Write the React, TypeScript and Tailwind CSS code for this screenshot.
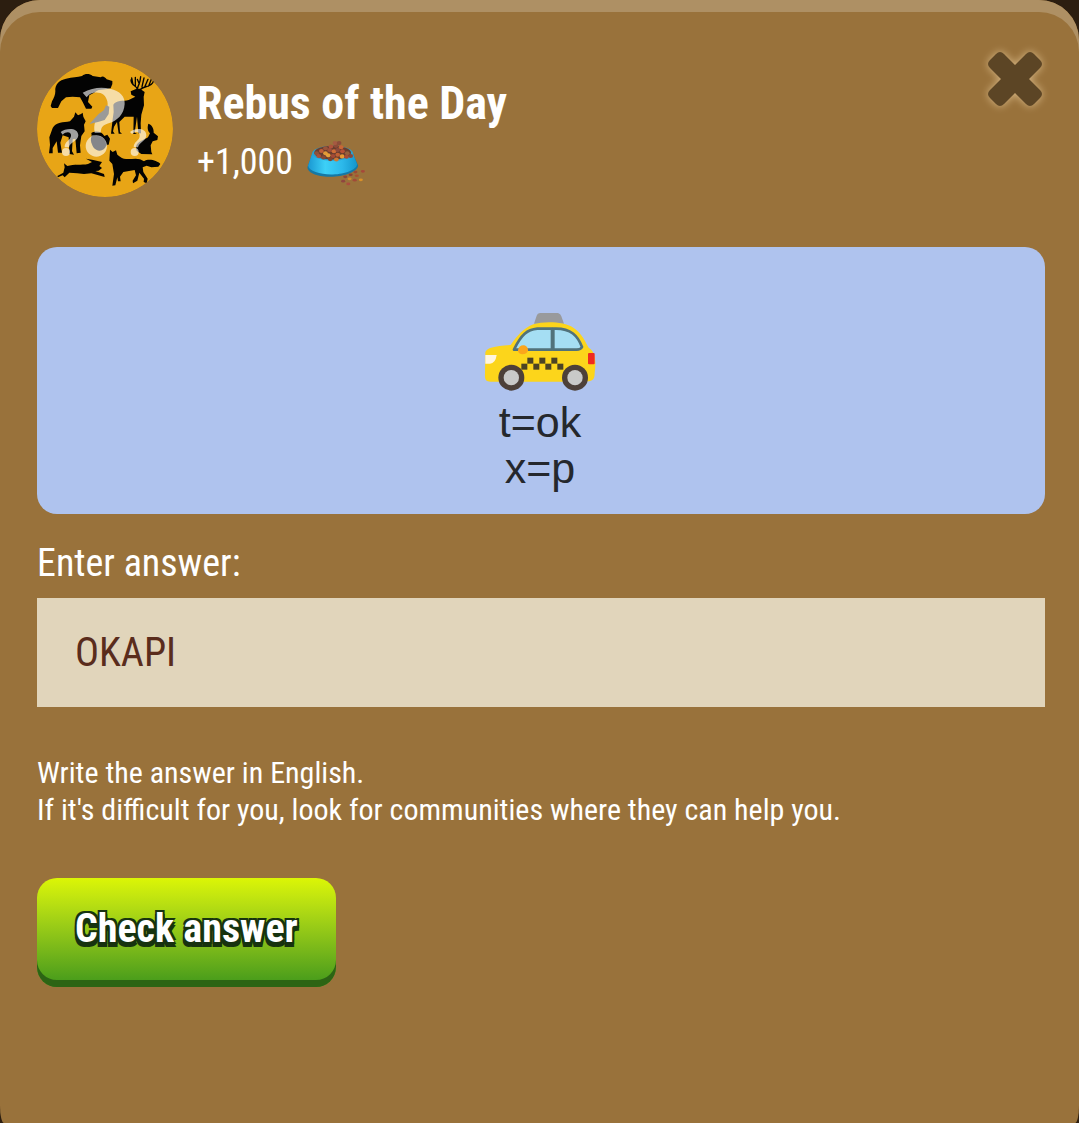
import { useState } from 'react';

const FONT = "font-['Roboto_Condensed','Roboto',sans-serif]";

/**
 * Round badge with animal silhouettes and question marks
 */
const AnimalsBadge = () => (
  <svg viewBox="21 17 408 408" className="size-[136px] shrink-0 rounded-full" aria-hidden="true">
    <circle cx="225" cy="221" r="204" fill="#e8a516" />
    <g fill="#030303">
      {/* Bear */}
      <path d="M62 152 L66 138 C72 128 76 118 76 108 C74 88 88 74 108 70 C128 66 142 66 156 62 C166 54 178 54 188 62 L212 66 C218 60 226 66 230 72 L247 77 L247 86 L242 99 L232 101 L206 104 C198 108 190 114 178 120 L174 140 L187 154 L184 160 L168 160 L158 140 L150 126 L128 124 L108 126 L94 138 L84 158 L66 158 Z" />
      {/* Deer */}
      <path d="M302 108 L318 101 L330 100 L344 110 L341 124 L342 150 L334 178 L332 204 L333 234 L325 234 L321 184 L314 232 L321 236 L310 236 L311 184 L284 184 L268 200 L270 230 L276 235 L266 235 L261 200 L252 214 L249 228 L254 235 L243 235 L248 192 L251 170 L250 148 C258 134 280 138 296 134 L316 124 L304 118 Z" />
      {/* Wolf */}
      <path d="M132 184 L136 171 L144 180 L153 176 L158 172 L160 184 L167 198 L162 208 L164 228 L154 242 L150 270 L152 292 L140 294 L136 250 L128 252 L126 288 L132 298 L118 296 L116 246 L98 240 L91 262 L96 292 L84 292 L80 258 L68 278 L68 294 L57 294 L60 268 L58 246 L68 218 C78 200 100 202 120 198 Z" />
      {/* Bird */}
      <path d="M184 233 C196 226 214 226 223 242 L232 238 L240 250 L236 268 L226 268 L222 258 L186 250 Z" />
      {/* Rabbit */}
      <path d="M355 205 C366 208 372 220 371 232 L384 243 L382 254 L368 258 L362 270 L364 290 L367 297 L334 296 L320 286 L318 274 C322 258 342 254 354 246 L360 234 C352 226 352 214 355 205 Z" />
      {/* Hare */}
      <path d="M82 362 L100 352 L104 336 L102 324 L112 332 C132 326 154 330 174 326 L186 320 L168 310 L190 314 L216 320 L208 332 L216 338 L206 346 L196 347 L222 356 L224 365 L184 354 L162 356 L142 354 L118 352 L104 366 L98 360 L84 366 Z" />
      {/* Fox */}
      <path d="M240 283 L248 290 L258 285 L262 298 L270 304 C288 318 312 306 330 312 L342 318 C356 308 382 316 391 326 L385 334 L364 336 L350 331 L338 336 L340 350 L353 370 L350 384 L341 380 L342 370 L328 352 L322 376 L309 384 L308 376 L318 360 L314 344 L280 350 L270 364 L272 378 L264 378 L262 366 L256 390 L247 391 L252 356 L247 326 L238 316 Z" />
    </g>
    {/* Antlers */}
    <path
      d="M322 102 C320 88 304 94 303 74 M309 88 L305 68 M316 92 L316 66 M322 102 C324 86 330 90 332 64 M328 86 L322 72 M332 102 C338 92 366 96 370 78 M344 95 L354 72 M356 92 L364 72 M336 94 L342 68"
      fill="none"
      stroke="#030303"
      strokeWidth="4"
      strokeLinecap="round"
    />
    {/* Question marks */}
    <g fill="#fff" fillOpacity="0.62">
      <path d="M158 112 C186 96 216 94 240 100 C270 106 286 124 284 146 C282 178 262 196 236 204 C218 210 214 214 212 232 L194 232 C190 204 196 192 212 184 C228 174 236 158 232 138 C228 118 212 108 190 112 C180 114 172 122 170 126 Z" />
      <path d="M92 230 C106 218 144 214 145 240 C144 258 120 260 117 276 L104 276 C103 258 121 256 123 242 C125 230 110 226 98 238 Z" />
      <path d="M300 230 C314 218 348 216 349 240 C348 258 328 260 324 276 L311 276 C311 258 329 256 329 242 C330 230 318 226 306 236 Z" />
      <circle cx="199" cy="272" r="32" />
      <circle cx="108" cy="290" r="12" />
      <circle cx="314" cy="290" r="12" />
    </g>
    <path d="M178 206 L206 176 L222 164 L228 150 L238 154 L236 176 L224 194 L204 200 Z" fill="#9a9a98" />
    <path d="M187 240 C202 242 216 244 223 252 L229 270 C224 288 202 292 190 276 C182 262 180 250 187 240 Z" fill="#85868a" />
  </svg>
);

const KIBBLE: [number, number, string][] = [
  [46, 52, '#8e523b'], [60, 45, '#c25e38'], [72, 52, '#e29a38'], [84, 42, '#a0503c'], [97, 46, '#cf6e38'],
  [108, 42, '#8c4a3c'], [122, 46, '#b85034'], [136, 52, '#98603c'], [52, 60, '#aa5038'], [66, 64, '#854a36'],
  [80, 58, '#e8a038'], [94, 60, '#a34a36'], [108, 56, '#c06034'], [121, 61, '#e69a34'], [134, 62, '#a84c36'],
  [88, 32, '#b0543c'], [103, 30, '#8f4b38'], [118, 34, '#c86636'], [72, 37, '#9a543a'], [100, 22, '#a55a42'],
  [146, 60, '#8d4638'], [112, 22, '#8d4c3a'], [86, 69, '#7f4532'], [104, 70, '#cf7832'],
];

const SPILLED: [number, number, string][] = [
  [182, 101, '#a6483a'], [160, 103, '#9c4a35'], [146, 111, '#8b4232'], [164, 114, '#aa5030'], [130, 117, '#8c4638'],
  [143, 123, '#d28a2a'], [158, 127, '#a24a38'], [176, 126, '#d99028'], [124, 130, '#8f4540'], [139, 138, '#aa4d3e'],
];

const FoodBowl = () => (
  <svg viewBox="0 0 200 150" className="h-[51px] w-[68px] shrink-0" role="img" aria-label="Food">
    <defs>
      <linearGradient id="bowl" x1="0" x2="1">
        <stop offset="0" stopColor="#1a98d2" />
        <stop offset="0.35" stopColor="#3dd0f7" />
        <stop offset="0.7" stopColor="#2cb8ea" />
        <stop offset="1" stopColor="#1496cc" />
      </linearGradient>
    </defs>
    <path d="M33 50 L19 88 C18 108 58 118 94 117 C132 116 168 100 168 84 L152 48 Z" fill="#1578a5" />
    <path d="M33 48 L21 84 C22 102 60 111 94 110 C130 109 164 96 165 80 L152 46 Z" fill="url(#bowl)" />
    <ellipse cx="93" cy="48" rx="60" ry="22" fill="#2aa0cf" />
    <ellipse cx="93" cy="46" rx="54" ry="20" fill="#6a3d2e" />
    {KIBBLE.map(([x, y, color]) => (
      <ellipse key={`${x}-${y}`} cx={x} cy={y - 4} rx="7" ry="6" fill={color} />
    ))}
    {SPILLED.map(([x, y, color]) => (
      <ellipse key={`${x}-${y}`} cx={x} cy={y} rx="6" ry="4" fill={color} />
    ))}
  </svg>
);

const Taxi = () => (
  <svg viewBox="0 0 336 234" className="h-[78px] w-[112px]" role="img" aria-label="Taxi">
    <path d="M168 0 H222 Q230 2 232 10 L240 32 H150 L158 8 Q160 0 168 0 Z" fill="#999a9c" />
    <path
      d="M4 118 C8 104 30 100 80 96 C98 70 120 44 148 34 C182 24 240 26 268 44 C294 60 306 90 314 104 C336 116 336 148 332 180 C332 202 324 206 300 206 H20 C4 206 2 198 3 180 Z"
      fill="#fcd51b"
    />
    <path d="M90 110 C112 64 130 50 160 47 H204 V110 Z" fill="#a5def3" stroke="#51727a" strokeWidth="8" strokeLinejoin="round" />
    <path d="M208 47 C262 44 282 70 294 102 Q290 110 278 110 H208 Z" fill="#a5def3" stroke="#51727a" strokeWidth="8" strokeLinejoin="round" />
    <path d="M102 112 C104 92 132 92 132 112 Q130 124 114 124 Q102 122 102 112 Z" fill="#fba61c" />
    <path d="M4 126 H38 Q34 152 18 152 H4 Z" fill="#fff5df" />
    <rect x="312" y="120" width="20" height="34" rx="3" fill="#ef2b20" />
    {[130, 166, 202].map((x) => (
      <g key={x} fill="#4b4324">
        <rect x={x} y="134" width="18" height="18" />
        <rect x={x - 18} y="152" width="18" height="18" />
      </g>
    ))}
    <rect x="220" y="152" width="18" height="18" fill="#4b4324" />
    {[82, 273].map((cx) => (
      <g key={cx}>
        <circle cx={cx} cy="194" r="39" fill="#4d4039" />
        <circle cx={cx} cy="194" r="23" fill="#c9c9c8" />
      </g>
    ))}
  </svg>
);

const App = () => {
  const [answer, setAnswer] = useState('OKAPI');

  return (
    <div className={`flex min-h-screen bg-[#2c1e10] ${FONT}`}>
      <main className="flex-1 rounded-t-[40px] rounded-br-[4px_17px] rounded-bl-[4px_17px] bg-[#99723b] pt-[51px] pr-[34px] pb-10 pl-[37px] text-white shadow-[inset_0_12px_0_#ae9064]">
        {/* Header */}
        <header className="flex items-start justify-between">
          <div className="flex items-center gap-6 pt-[10px]">
            <AnimalsBadge />
            <div className="pt-2">
              <h1 className="text-[46px] leading-[58px] font-bold">Rebus of the Day</h1>
              <p className="flex items-center gap-2 text-[36px] leading-[60px]">
                +1,000 <FoodBowl />
              </p>
            </div>
          </div>
          <button type="button" aria-label="Close" className="mr-[2px] shrink-0 cursor-pointer">
            <svg viewBox="0 0 56 56" className="size-14 overflow-visible drop-shadow-[0_0_4px_#d8b887]">
              <path
                d="M28 14 L39 3 Q43 -1 47 3 L53 9 Q57 13 53 17 L42 28 L53 39 Q57 43 53 47 L47 53 Q43 57 39 53 L28 42 L17 53 Q13 57 9 53 L3 47 Q-1 43 3 39 L14 28 L3 17 Q-1 13 3 9 L9 3 Q13 -1 17 3 Z"
                fill="#5c4525"
              />
            </svg>
          </button>
        </header>

        {/* Rebus */}
        <div className="mt-[50px] flex flex-col items-center rounded-[20px] bg-[#afc3ee] pt-[66px] pr-[2px] pb-[23px]">
          <Taxi />
          <p className="mt-2 text-center font-['Liberation_Sans',sans-serif] text-[43px] leading-[46px] text-[#25282d]">
            t=ok
            <br />
            x=p
          </p>
        </div>

        {/* Answer form */}
        <form onSubmit={(e) => e.preventDefault()}>
          <label htmlFor="answer" className="mt-6 block text-[38px] leading-[50px]">
            Enter answer:
          </label>
          <input
            id="answer"
            type="text"
            value={answer}
            onChange={(e) => setAnswer(e.target.value)}
            className="mt-[10px] block h-[109px] w-full bg-[#e1d5bb] px-[38px] text-[40px] text-[#5a2c1c] outline-none"
          />
          <p className="mt-[47px] text-[30px] leading-[37px]">
            Write the answer in English.
            <br />
            If it's difficult for you, look for communities where they can help you.
          </p>
          <button
            type="submit"
            className="mt-[50px] h-[109px] cursor-pointer rounded-[20px] bg-linear-to-b from-[#dcf605] to-[#3f981b] px-[38px] pb-[7px] text-[40px] font-bold shadow-[inset_0_-7px_0_#2c6414] [text-shadow:-2px_-2px_0_#17330f,2px_-2px_0_#17330f,-2px_2px_0_#17330f,2px_2px_0_#17330f,-2px_5px_0_#17330f,2px_5px_0_#17330f]"
          >
            Check answer
          </button>
        </form>
      </main>
    </div>
  );
};

export default App;
